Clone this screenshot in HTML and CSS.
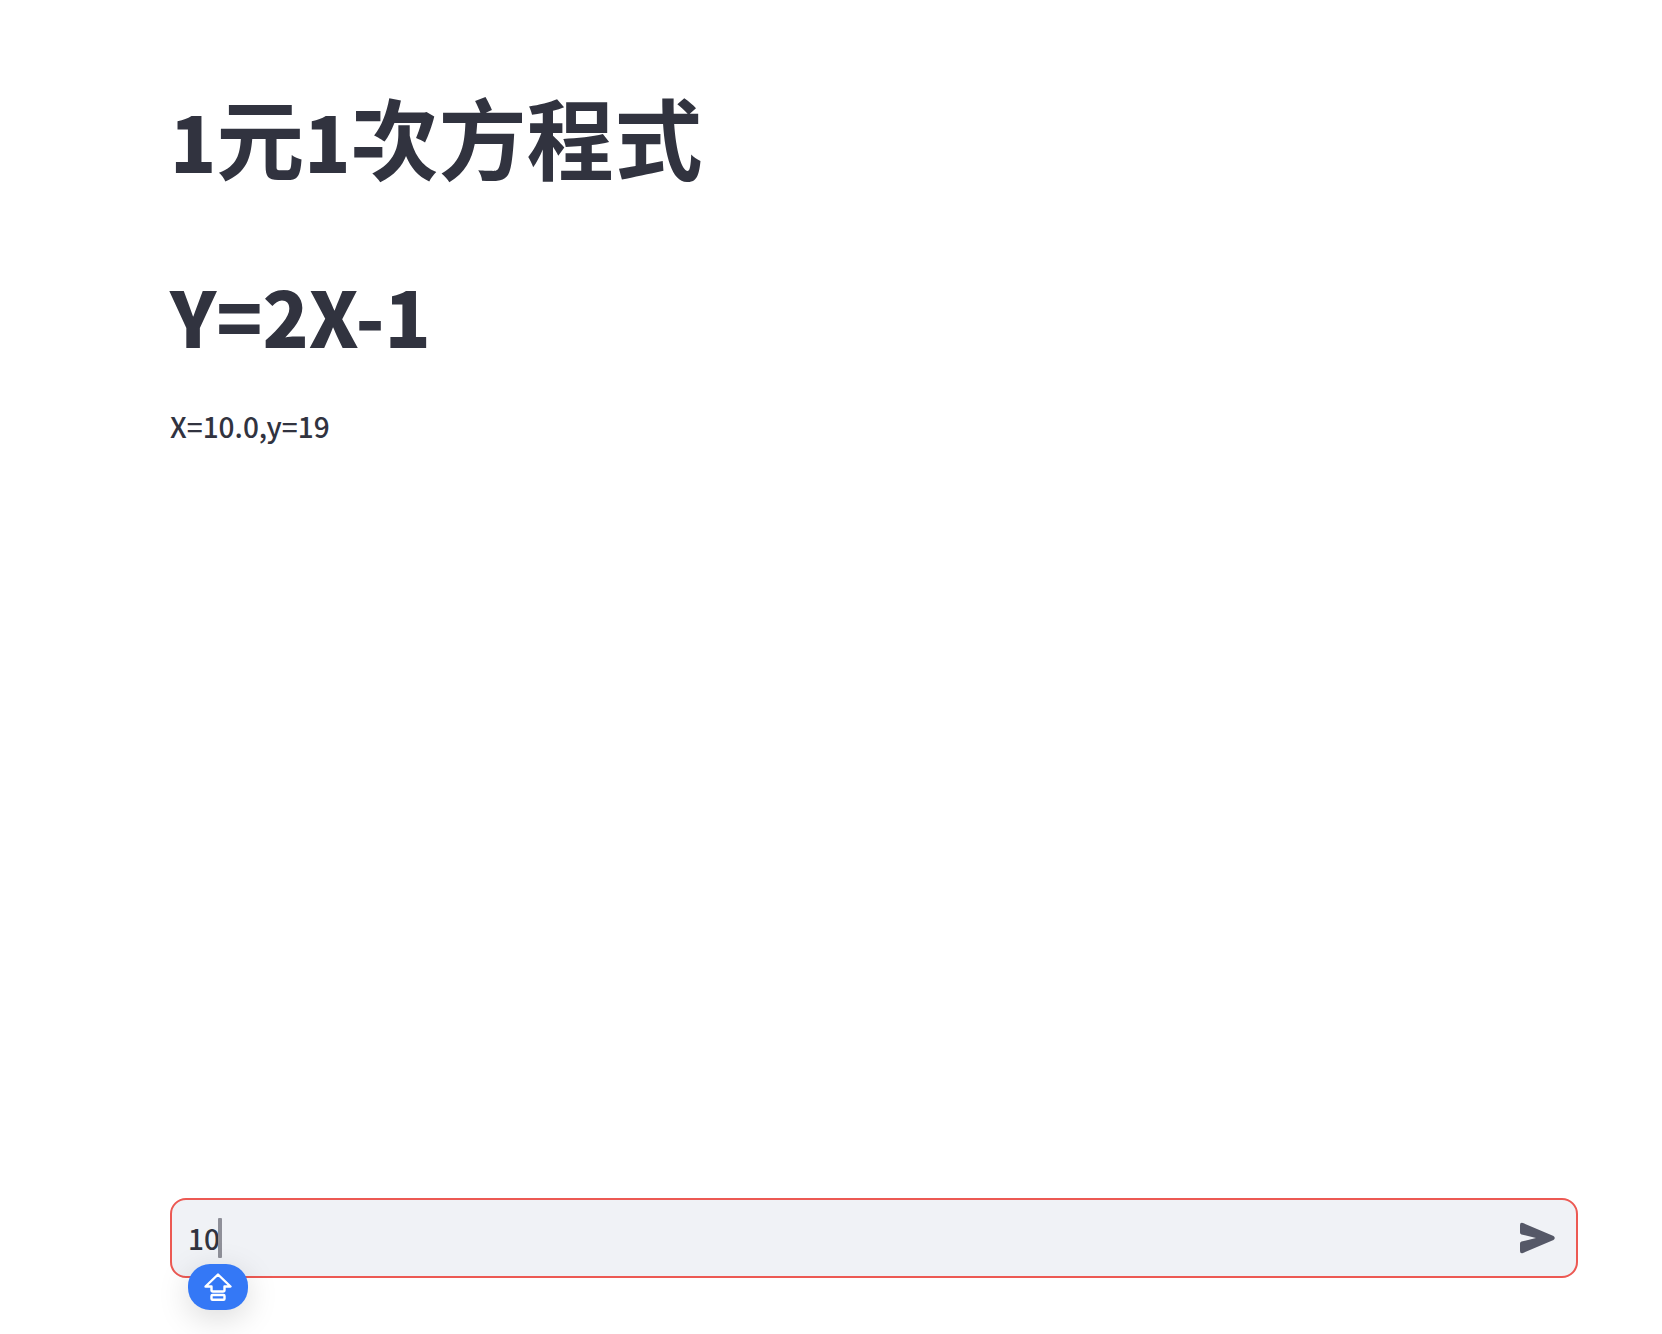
FILE: index.html
```html
<!DOCTYPE html>
<html lang="zh-Hant">
<head>
<meta charset="utf-8">
<meta name="viewport" content="width=device-width, initial-scale=1">
<title>1元1次方程式</title>
<link rel="stylesheet" href="styles.css">
</head>
<body>
<div class="app">
  <main class="content">
    <h1 class="title"><span class="latin">1</span>元<span class="latin">1</span>次方程式</h1>
    <h1 class="title"><span class="latin">Y=2X-1</span></h1>
    <p class="result">X=10.0,y=19</p>
  </main>
  <form class="chat">
    <input class="chat-input" type="text" value="10" aria-label="X">
    <button class="send" type="button" aria-label="Send">
      <svg width="36" height="32" viewBox="0 0 36 32" aria-hidden="true"><path d="M0 3Q0 0 3 1L33.500 14Q36 16 33.500 18L3 31Q0 32 0 29V21.500Q0 20 1.500 19.500L16 16L1.500 12.500Q0 12 0 10.500Z" fill="#555867"/></svg>
    </button>
    <span class="caret"></span>
    <span class="caps">
      <svg width="28" height="28" viewBox="0 0 28 28" fill="none" stroke="#fff" stroke-width="2.400" stroke-linejoin="round" aria-hidden="true"><path d="M14 1.500L26.500 13.500H20.500V17Q20.500 18.500 19 18.500H9Q7.500 18.500 7.500 17V13.500H1.500Z"/><rect x="7.500" y="22" width="13" height="4.800" rx="1"/></svg>
    </span>
  </form>
</div>
</body>
</html>
```
FILE: styles.css
```css
* {
  box-sizing: border-box;
}

body {
  margin: 0;
  background: #fff;
  color: #31333f;
  font-family: "Noto Sans CJK TC", sans-serif;
}

.app {
  display: flex;
  flex-direction: column;
  min-height: 100vh;
  padding: 50px 84px 56px 170px;
}

.content {
  flex: 1;
}

.title {
  margin: 0;
  padding: 32px 0;
  font-size: 88px;
  font-weight: 700;
  line-height: 106px;
}

.latin {
  font-size: 76px;
  font-weight: 900;
}

.result {
  margin: 0;
  font-size: 28px;
  font-weight: 500;
  line-height: 52px;
}

.chat {
  position: relative;
  display: flex;
  align-items: center;
  height: 80px;
  padding: 0 20px 0 16px;
  border: 2px solid #ec5953;
  border-radius: 16px;
  background: #f0f2f6;
}

.chat-input {
  flex: 1;
  min-width: 0;
  padding: 0;
  border: 0;
  outline: 0;
  background: transparent;
  color: inherit;
  font-family: inherit;
  font-size: 28px;
  font-weight: 500;
  line-height: 52px;
}

.send {
  display: flex;
  padding: 0;
  border: 0;
  background: transparent;
}

.caret {
  position: absolute;
  top: 18px;
  left: 46px;
  width: 4px;
  height: 40px;
  border-radius: 1px;
  background: #8f9099;
}

.caps {
  position: absolute;
  top: 64px;
  left: 16px;
  display: flex;
  align-items: center;
  justify-content: center;
  width: 60px;
  height: 46px;
  border-radius: 22px;
  background: #3478f6;
  box-shadow: 0 8px 32px rgba(0, 0, 0, 0.15);
}
```
